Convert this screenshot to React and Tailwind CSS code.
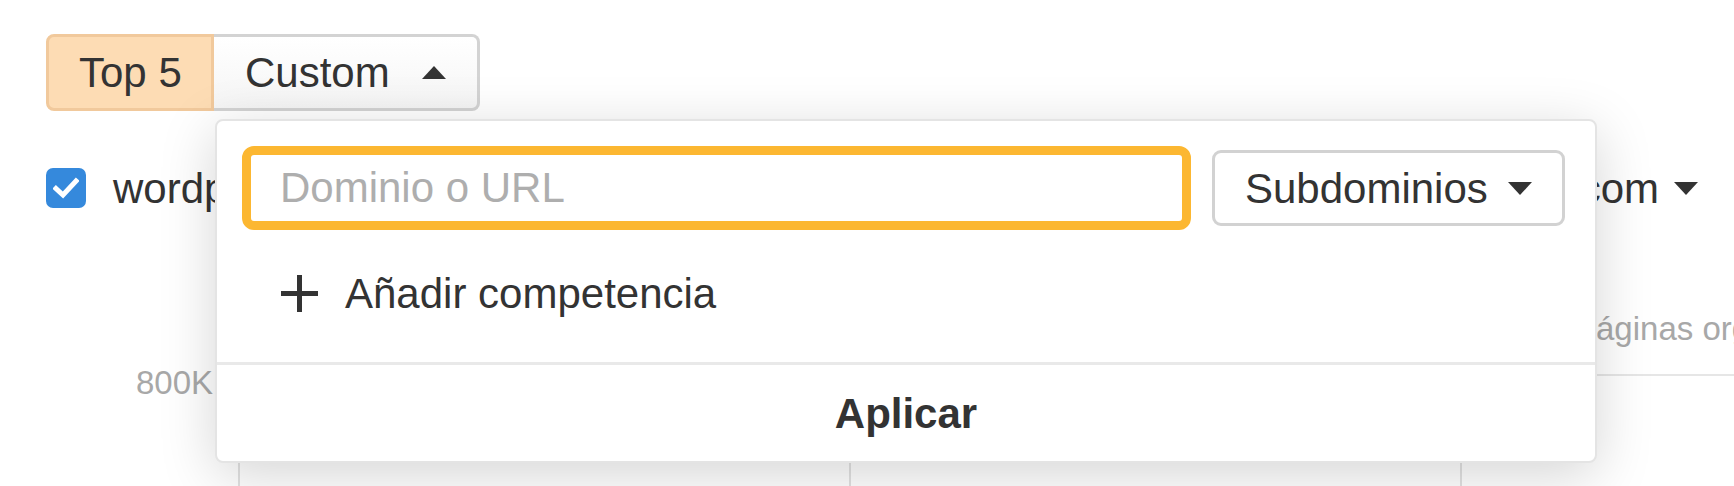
import React from "react";

function Caret({ up = false, className = "" }) {
  return (
    <svg width="24" height="13" viewBox="0 0 24 13" className={className}>
      {up ? (
        <path d="M0 13 L12 0 L24 13 Z" fill="#333" />
      ) : (
        <path d="M0 0 L24 0 L12 13 Z" fill="#333" />
      )}
    </svg>
  );
}

function Checkbox() {
  return (
    <div className="flex h-[40px] w-[40px] items-center justify-center rounded-[7px] bg-[#3589dc]">
      <svg width="26" height="22" viewBox="0 0 26 22">
        <path
          d="M3 11.5 L10 18 L23 4"
          fill="none"
          stroke="#fff"
          strokeWidth="5"
          strokeLinecap="square"
        />
      </svg>
    </div>
  );
}

function CompetitorsPopover() {
  return (
    <div className="absolute left-[215px] top-[119px] z-10 flex h-[344px] w-[1382px] flex-col rounded-[8px] border-2 border-[#e4e4e4] bg-white shadow-[0_12px_55px_rgba(0,0,0,0.17)]">
      <div className="h-[241px] px-[25px] pt-[25px]">
        <div className="flex items-center">
          <input
            placeholder="Dominio o URL"
            className="h-[84px] w-[949px] rounded-[12px] border-[9px] border-[#fcb731] bg-white pl-[29px] text-[42px] text-[#333] outline-none placeholder:text-[#aeaeae]"
          />
          <button className="ml-[21px] flex h-[76px] w-[353px] items-center rounded-[9px] border-[3px] border-[#d2d2d2] bg-white pl-[30px] text-[42px] text-[#333]">
            <span>Subdominios</span>
            <Caret className="ml-[20px]" />
          </button>
        </div>
        <button className="ml-[39px] mt-[33px] flex h-[60px] items-center text-[42px] text-[#333]">
          <svg width="37" height="37" viewBox="0 0 37 37">
            <path d="M18.5 0 V37 M0 18.5 H37" stroke="#333" strokeWidth="5" />
          </svg>
          <span className="ml-[27px]">Añadir competencia</span>
        </button>
      </div>
      <div className="flex flex-1 items-center justify-center border-t-[3px] border-[#e9e9e9]">
        <span className="text-[42px] font-bold text-[#333]">Aplicar</span>
      </div>
    </div>
  );
}

export default function App() {
  return (
    <div className="relative h-[486px] w-[1734px] overflow-hidden bg-white font-['Liberation_Sans',Arial,sans-serif] text-[#333]">
      <div className="pl-[46px] pt-[34px]">
        <div className="flex h-[77px] text-[42px]">
          <div className="flex w-[168px] items-center rounded-l-[8px] border-[3px] border-[#f1c99c] bg-[#fddcb4] pl-[30px]">
            Top 5
          </div>
          <div className="flex w-[266px] items-center rounded-r-[8px] border-[3px] border-l-0 border-[#d3d3d3] bg-gradient-to-b from-white to-[#f5f5f5] pl-[31px]">
            <span>Custom</span>
            <Caret up className="ml-[32px]" />
          </div>
        </div>

        <div className="mt-[57px] flex h-[40px] w-[1652px] items-center justify-between text-[42px]">
          <div className="flex items-center">
            <Checkbox />
            <span className="ml-[27px]">wordpress.com</span>
          </div>
          <div className="flex items-center">
            <span>blogger.com</span>
            <Caret className="ml-[15px]" />
          </div>
        </div>

        <div className="ml-[1528px] mt-[104px] whitespace-nowrap text-[33px] leading-[33px] text-[#a8a8a8]">
          Páginas orgánicas
        </div>

        <div className="mt-[21px] flex">
          <div className="w-[167px] text-right text-[33px] leading-[34px] text-[#a8a8a8]">
            800K
          </div>
          <div className="ml-[25px] mt-[8px] grid h-[200px] flex-1 grid-cols-[611px_611px_1fr] border-t-2 border-[#e6e6e6]">
            <div className="border-l-2 border-[#e2e2e2]" />
            <div className="border-l-2 border-[#e2e2e2]" />
            <div className="border-l-2 border-[#e2e2e2]" />
          </div>
        </div>
      </div>

      <CompetitorsPopover />
    </div>
  );
}
